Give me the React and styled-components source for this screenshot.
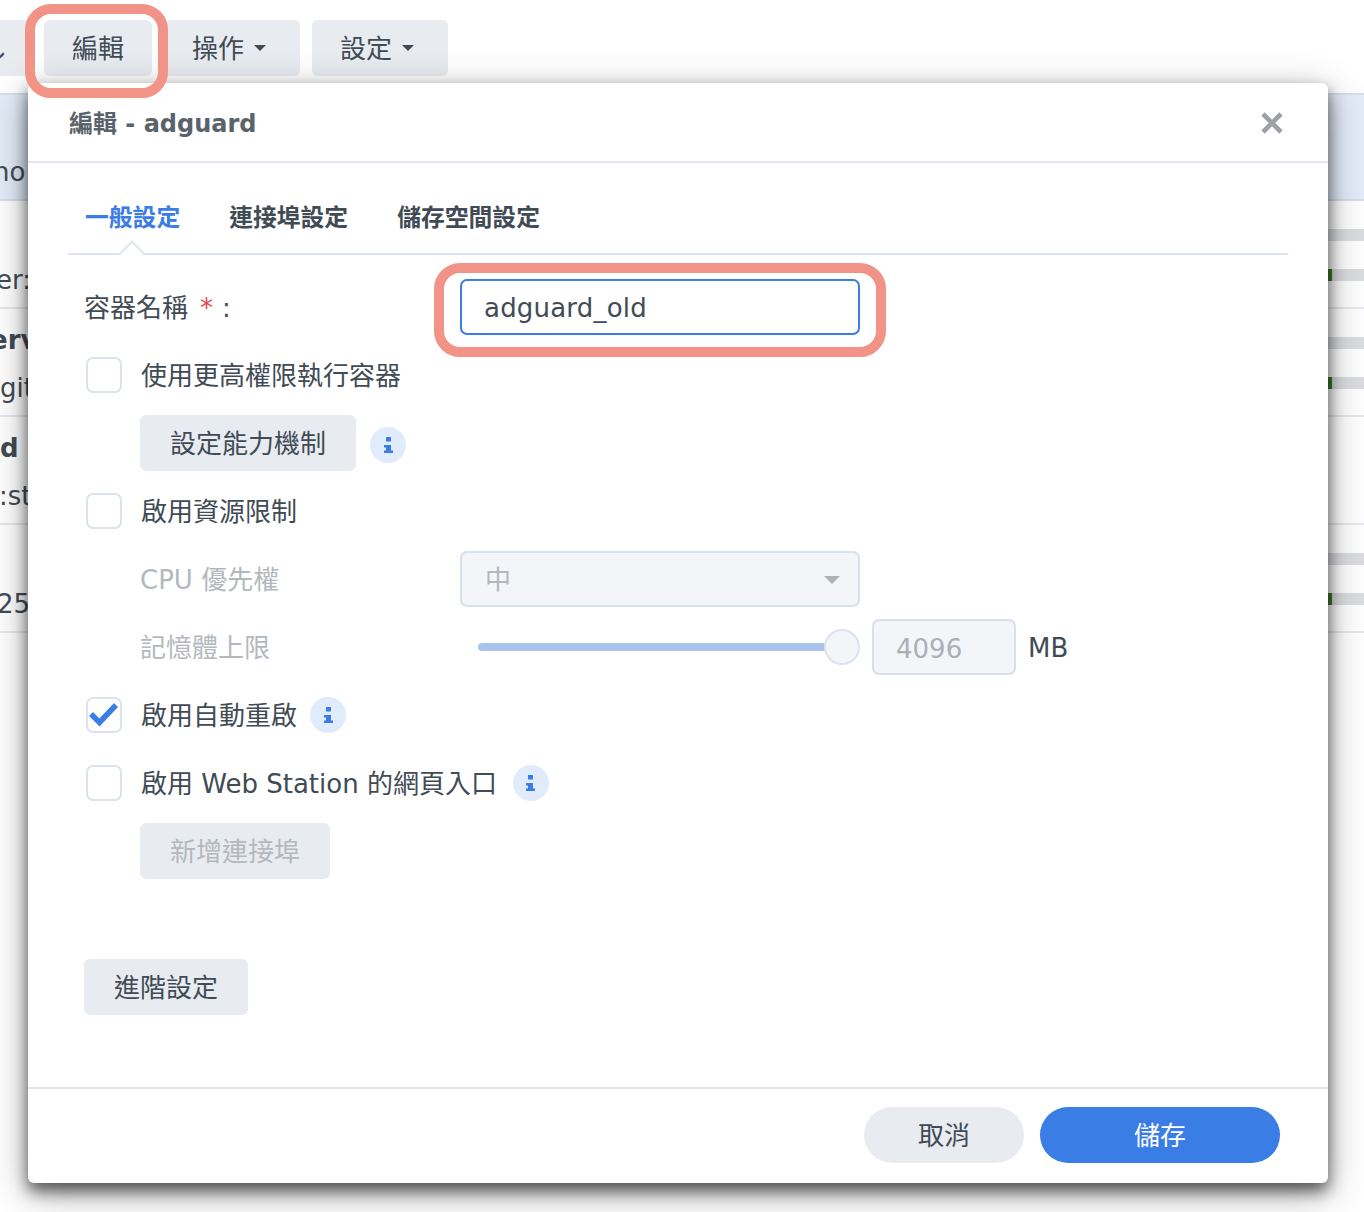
import React from 'react';
import styled, { createGlobalStyle } from 'styled-components';

const GlobalStyle = createGlobalStyle`
    html, body {
        margin: 0;
        padding: 0;
        background: #fff;
    }
    * {
        box-sizing: border-box;
    }
    body {
        font-family: "DejaVu Sans", "Noto Sans CJK TC", sans-serif;
        color: #414b55;
    }
`;

const Stage = styled.div`
    position: relative;
    width: 1364px;
    height: 1212px;
    overflow: hidden;
    background: #fff;
`;

// page behind the dialog
const Toolbar = styled.div`
    display: flex;
    gap: 12px;
    height: 93px;
    padding-top: 20px;
    margin-left: -36px;
`;
const ToolButton = styled.div`
    display: flex;
    align-items: center;
    justify-content: ${(p) => (p.$end ? 'flex-end' : 'center')};
    gap: 10px;
    width: ${(p) => p.$w}px;
    height: 56px;
    padding-right: ${(p) => p.$right || 0}px;
    padding-bottom: 4px;
    background: #e8ecf1;
    border-radius: 6px;
    font-size: 26px;
`;
const Caret = styled.span`
    width: 0;
    height: 0;
    margin-top: 4px;
    border-left: 6.5px solid transparent;
    border-right: 6.5px solid transparent;
    border-top: 6px solid #414b55;
`;
const TableRow = styled.div`
    display: flex;
    justify-content: space-between;
    height: 108px;
    border-bottom: 2px solid ${(p) => (p.$selected ? '#d5dfea' : '#e5e9ee')};
    border-top: ${(p) => (p.$selected ? '2px solid #d5dfea' : '0')};
    background: ${(p) => (p.$selected ? '#e3ecf8' : '#fff')};
`;
const RowText = styled.div`
    padding-top: ${(p) => (p.$selected ? 5 : 7)}px;
    font-size: 26px;
    line-height: 48px;
    white-space: nowrap;
`;
const RowLine = styled.div`
    height: 48px;
    margin-left: ${(p) => p.$x || 0}px;
    font-weight: ${(p) => (p.$bold ? 700 : 400)};
`;
const Meters = styled.div`
    display: flex;
    flex-direction: column;
    gap: 28px;
    width: 36px;
    padding-top: 28px;
`;
const Meter = styled.div`
    height: 12px;
    background: #dcdde0;
    border-left: ${(p) => (p.$used ? '4px solid #3b7d2b' : '0')};
`;

// dialog window
const Dialog = styled.div`
    position: absolute;
    left: 28px;
    top: 83px;
    display: flex;
    flex-direction: column;
    width: 1300px;
    height: 1100px;
    background: #fff;
    border-radius: 6px;
    box-shadow: 0 8px 16px rgba(0, 0, 0, 0.6), 0 10px 40px rgba(0, 0, 0, 0.3);
`;
const DialogHead = styled.div`
    display: flex;
    align-items: center;
    justify-content: space-between;
    height: 80px;
    padding: 0 44px 0 41px;
    border-bottom: 2px solid #e3e8ef;
`;
const DialogTitle = styled.div`
    padding-bottom: 2px;
    font-size: 24px;
    font-weight: 700;
    color: #5a636b;
`;
const CloseSlot = styled.span`
    display: flex;
    padding-top: 2px;
`;
const DialogBody = styled.div`
    flex: 1;
    padding: 0 40px;
`;
const Tabs = styled.div`
    position: relative;
    display: flex;
    align-items: center;
    gap: 49px;
    height: 92px;
    padding: 14px 0 0 17px;
    border-bottom: 2px solid #dfe5f0;
`;
const Tab = styled.div`
    font-size: 23.8px;
    font-weight: 700;
    color: ${(p) => (p.$active ? '#3a7de4' : '#414b55')};
`;
const TabNotch = styled.span`
    position: absolute;
    left: 55px;
    bottom: -9px;
    width: 18px;
    height: 18px;
    background: #fff;
    border-top: 2px solid #dfe5f0;
    border-left: 2px solid #dfe5f0;
    transform: rotate(45deg);
`;
const Form = styled.div`
    display: flex;
    flex-direction: column;
    gap: 12px;
    padding: 24px 0 0 16px;
`;
const Row = styled.div`
    display: flex;
    align-items: center;
    height: 56px;
    padding-left: ${(p) => p.$indent || 0}px;
`;
const FieldLabel = styled.div`
    width: ${(p) => p.$w}px;
    flex: none;
    padding-bottom: 4px;
    font-size: 26px;
    color: ${(p) => (p.$disabled ? '#b4b8bd' : '#414b55')};
`;
const Star = styled.span`
    margin: 0 9px 0 12px;
    color: #e14b4b;
`;
const TextInput = styled.input`
    width: 400px;
    height: 56px;
    padding: 2px 22px 0;
    border: 2px solid #3a7de4;
    border-radius: 7px;
    outline: none;
    background: #fff;
    font: 26px "DejaVu Sans", sans-serif;
    letter-spacing: 0.2px;
    color: #414b55;
`;
const CheckBox = styled.span`
    display: flex;
    align-items: center;
    justify-content: center;
    flex: none;
    width: 36px;
    height: 36px;
    margin: 0 19px 0 2px;
    border: 2px solid #dde3ee;
    border-radius: 7px;
    background: #fff;
`;
const CheckLabel = styled.span`
    padding-bottom: 4px;
    font-size: 26px;
    white-space: nowrap;
`;
const Button = styled.div`
    display: flex;
    align-items: center;
    justify-content: center;
    width: ${(p) => p.$w}px;
    height: 56px;
    padding-bottom: 4px;
    background: #e8ecf1;
    border-radius: 6px;
    font-size: 26px;
    color: ${(p) => (p.$disabled ? '#b4b8bd' : '#414b55')};
`;
const InfoBadge = styled.span`
    display: flex;
    align-items: center;
    justify-content: center;
    flex: none;
    width: 36px;
    height: 36px;
    margin-left: ${(p) => p.$gap}px;
    margin-top: ${(p) => p.$drop || 0}px;
    border-radius: 50%;
    background: #e0ebfb;
`;
const SelectBox = styled.div`
    display: flex;
    align-items: center;
    justify-content: space-between;
    width: 400px;
    height: 56px;
    padding: 0 18px 0 23px;
    background: #f3f5f9;
    border: 2px solid #d8e0ea;
    border-radius: 7px;
    font-size: 26px;
    color: #b4b8bd;
`;
const SelectValue = styled.span`
    margin-top: -4px;
`;
const SelectCaret = styled.span`
    width: 0;
    height: 0;
    margin-top: 2px;
    border-left: 8px solid transparent;
    border-right: 8px solid transparent;
    border-top: 8px solid #b0b3b6;
`;
const Slider = styled.div`
    position: relative;
    display: flex;
    align-items: center;
    width: 400px;
    height: 36px;
    padding-left: 18px;
`;
const SliderTrack = styled.div`
    width: 352px;
    height: 8px;
    border-radius: 4px;
    background: #a9c5ef;
`;
const SliderThumb = styled.span`
    position: absolute;
    right: 0;
    top: 0;
    width: 36px;
    height: 36px;
    border-radius: 50%;
    background: #f3f5f9;
    border: 2px solid #dde3ec;
`;
const NumberBox = styled.div`
    display: flex;
    align-items: center;
    width: 144px;
    height: 56px;
    margin-left: 12px;
    padding: 3px 0 0 22px;
    background: #f3f5f9;
    border: 2px solid #d8e0ea;
    border-radius: 7px;
    font-size: 26px;
    color: #aab0b5;
`;
const Unit = styled.span`
    margin: 2px 0 0 12px;
    font-size: 26px;
`;
const AdvancedRow = styled.div`
    margin: 80px 0 0 16px;
`;
const DialogFoot = styled.div`
    display: flex;
    justify-content: flex-end;
    gap: 16px;
    height: 96px;
    padding: 18px 48px 0 0;
    border-top: 2px solid #e3e8ef;
`;
const PillButton = styled.div`
    display: flex;
    align-items: center;
    justify-content: center;
    width: ${(p) => p.$w}px;
    height: 56px;
    padding-bottom: 4px;
    border-radius: 28px;
    font-size: 26px;
    background: ${(p) => (p.$primary ? '#3a7de4' : '#e8ecf1')};
    color: ${(p) => (p.$primary ? '#fff' : '#414b55')};
`;

// salmon callout frames drawn on top of the screenshot
const Callout = styled.div`
    position: absolute;
    left: ${(p) => p.$x}px;
    top: ${(p) => p.$y}px;
    width: ${(p) => p.$w}px;
    height: ${(p) => p.$h}px;
    border: 10px solid #f29387;
    border-radius: 26px;
`;

const InfoIcon = () => (
    <svg width="9" height="16" viewBox="0 0 9 16" fill="#3a7de4">
        <rect x="2" y="0" width="5" height="4.5" />
        <rect x="2" y="8" width="5" height="8" />
        <rect x="0" y="8" width="5" height="2.5" />
        <rect x="0" y="13.5" width="9" height="2.5" />
    </svg>
);

const CheckIcon = () => (
    <svg width="32" height="26" viewBox="0 0 32 26" fill="none" stroke="#3a7de4" strokeWidth="5.5">
        <path d="M3 12 L11.5 20.5 L28 3" />
    </svg>
);

const CloseIcon = () => (
    <svg width="24" height="24" viewBox="0 0 24 24" fill="none" stroke="#9da1a5" strokeWidth="4.6">
        <path d="M3 3 L21 21 M21 3 L3 21" />
    </svg>
);

const tableRows = [
    { selected: true, lines: [{}, { text: 'no', x: -7 }] },
    { lines: [{}, { text: 'er:', x: -4 }], used: true },
    { lines: [{ text: 'erv', bold: true, x: -10 }, { text: 'git', x: 0 }], used: true },
    { lines: [{ text: 'd', bold: true, x: 0 }, { text: ':st', x: -1 }], hideMeters: true },
    { lines: [{}, { text: '25', x: -3 }], used: true },
];

const App = () => {
    return (
        <Stage>
            <GlobalStyle />
            <Toolbar>
                <ToolButton $w={68} $end $right={25}>し</ToolButton>
                <ToolButton $w={108}>編輯</ToolButton>
                <ToolButton $w={136} $right={6}>操作<Caret /></ToolButton>
                <ToolButton $w={136} $right={6}>設定<Caret /></ToolButton>
            </Toolbar>
            {tableRows.map((row, i) => (
                <TableRow key={i} $selected={row.selected}>
                    <RowText $selected={row.selected}>
                        {row.lines.map((line, j) => (
                            <RowLine key={j} $bold={line.bold} $x={line.x}>{line.text}</RowLine>
                        ))}
                    </RowText>
                    {!row.selected && !row.hideMeters && (
                        <Meters>
                            <Meter />
                            <Meter $used={row.used} />
                        </Meters>
                    )}
                </TableRow>
            ))}

            <Dialog>
                <DialogHead>
                    <DialogTitle>編輯 - adguard</DialogTitle>
                    <CloseSlot><CloseIcon /></CloseSlot>
                </DialogHead>
                <DialogBody>
                    <Tabs>
                        <Tab $active>一般設定</Tab>
                        <Tab>連接埠設定</Tab>
                        <Tab>儲存空間設定</Tab>
                        <TabNotch />
                    </Tabs>
                    <Form>
                        <Row>
                            <FieldLabel $w={376}>容器名稱<Star>*</Star>:</FieldLabel>
                            <TextInput value="adguard_old" readOnly />
                        </Row>
                        <Row>
                            <CheckBox />
                            <CheckLabel>使用更高權限執行容器</CheckLabel>
                        </Row>
                        <Row $indent={56}>
                            <Button $w={216}>設定能力機制</Button>
                            <InfoBadge $gap={14} $drop={4}><InfoIcon /></InfoBadge>
                        </Row>
                        <Row>
                            <CheckBox />
                            <CheckLabel>啟用資源限制</CheckLabel>
                        </Row>
                        <Row $indent={56}>
                            <FieldLabel $w={320} $disabled>CPU 優先權</FieldLabel>
                            <SelectBox><SelectValue>中</SelectValue><SelectCaret /></SelectBox>
                        </Row>
                        <Row $indent={56}>
                            <FieldLabel $w={320} $disabled>記憶體上限</FieldLabel>
                            <Slider>
                                <SliderTrack />
                                <SliderThumb />
                            </Slider>
                            <NumberBox>4096</NumberBox>
                            <Unit>MB</Unit>
                        </Row>
                        <Row>
                            <CheckBox><CheckIcon /></CheckBox>
                            <CheckLabel>啟用自動重啟</CheckLabel>
                            <InfoBadge $gap={13}><InfoIcon /></InfoBadge>
                        </Row>
                        <Row>
                            <CheckBox />
                            <CheckLabel>啟用 Web Station 的網頁入口</CheckLabel>
                            <InfoBadge $gap={16}><InfoIcon /></InfoBadge>
                        </Row>
                        <Row $indent={56}>
                            <Button $w={190} $disabled>新增連接埠</Button>
                        </Row>
                    </Form>
                    <AdvancedRow>
                        <Button $w={164}>進階設定</Button>
                    </AdvancedRow>
                </DialogBody>
                <DialogFoot>
                    <PillButton $w={160}>取消</PillButton>
                    <PillButton $w={240} $primary>儲存</PillButton>
                </DialogFoot>
            </Dialog>

            <Callout $x={25} $y={4} $w={143} $h={94} />
            <Callout $x={434} $y={263} $w={452} $h={94} />
        </Stage>
    );
};

export default App;
